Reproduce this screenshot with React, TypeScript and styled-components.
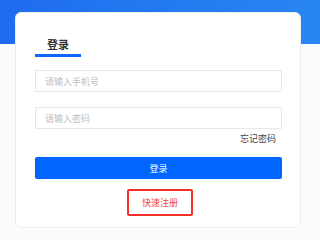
import React from 'react';
import styled, { createGlobalStyle } from 'styled-components';

const GlobalStyle = createGlobalStyle`
  html, body {
    margin: 0;
    padding: 0;
  }
  body {
    font-family: "Noto Sans CJK SC", "Noto Sans", sans-serif;
    background: #fafbfc;
  }
  * {
    box-sizing: border-box;
  }
`;

const Page = styled.div`
  min-height: 100vh;
  padding: 12px 18px 8px 15px;
  background:
    linear-gradient(90deg, #1f6cef 0%, #2886f1 100%) 0 0 / 100% 44px no-repeat,
    #fafbfc;
`;

const Card = styled.div`
  width: 286px;
  height: 216px;
  background: #ffffff;
  border: 1px solid #eceef2;
  border-radius: 6px;
  padding: 0 18px 0 19px;
  display: flex;
  flex-direction: column;
`;

const Tab = styled.div`
  width: 46px;
  margin-top: 24px;
  padding-bottom: 2px;
  border-bottom: 3px solid #0a68fa;
  text-align: center;
  font-size: 11px;
  line-height: 15px;
  font-weight: 600;
  color: #333333;
`;

const Input = styled.input<{ $gap: number }>`
  display: block;
  width: 100%;
  height: 22px;
  margin-top: ${(p) => p.$gap}px;
  padding: 0 9px;
  border: 1px solid #e8e8ea;
  border-radius: 1px;
  font-family: inherit;
  font-size: 9px;
  color: #333333;
  outline: none;
  &::placeholder {
    color: #c0c0c4;
  }
`;

const ForgetRow = styled.div`
  margin-top: 4px;
  padding-right: 6px;
  text-align: right;
  font-size: 9px;
  line-height: 12px;
  color: #444444;
`;

const SubmitButton = styled.button`
  width: 100%;
  height: 22px;
  margin-top: 12px;
  border: none;
  border-radius: 2px;
  background: #0066ff;
  color: #ffffff;
  font-family: inherit;
  font-size: 9px;
`;

const RegisterButton = styled.button`
  align-self: center;
  width: 66px;
  height: 27px;
  margin-top: 10px;
  margin-left: 3px;
  border: 2px solid #f5302a;
  border-radius: 2px;
  background: #ffffff;
  color: #ef4a4a;
  font-family: inherit;
  font-size: 9px;
  padding: 0;
`;

export default function App() {
  return (
    <>
      <GlobalStyle />
      <Page>
        <Card>
          <Tab>登录</Tab>
          <Input $gap={13} type="text" placeholder="请输入手机号" />
          <Input $gap={15} type="password" placeholder="请输入密码" />
          <ForgetRow>忘记密码</ForgetRow>
          <SubmitButton>登录</SubmitButton>
          <RegisterButton>快速注册</RegisterButton>
        </Card>
      </Page>
    </>
  );
}
